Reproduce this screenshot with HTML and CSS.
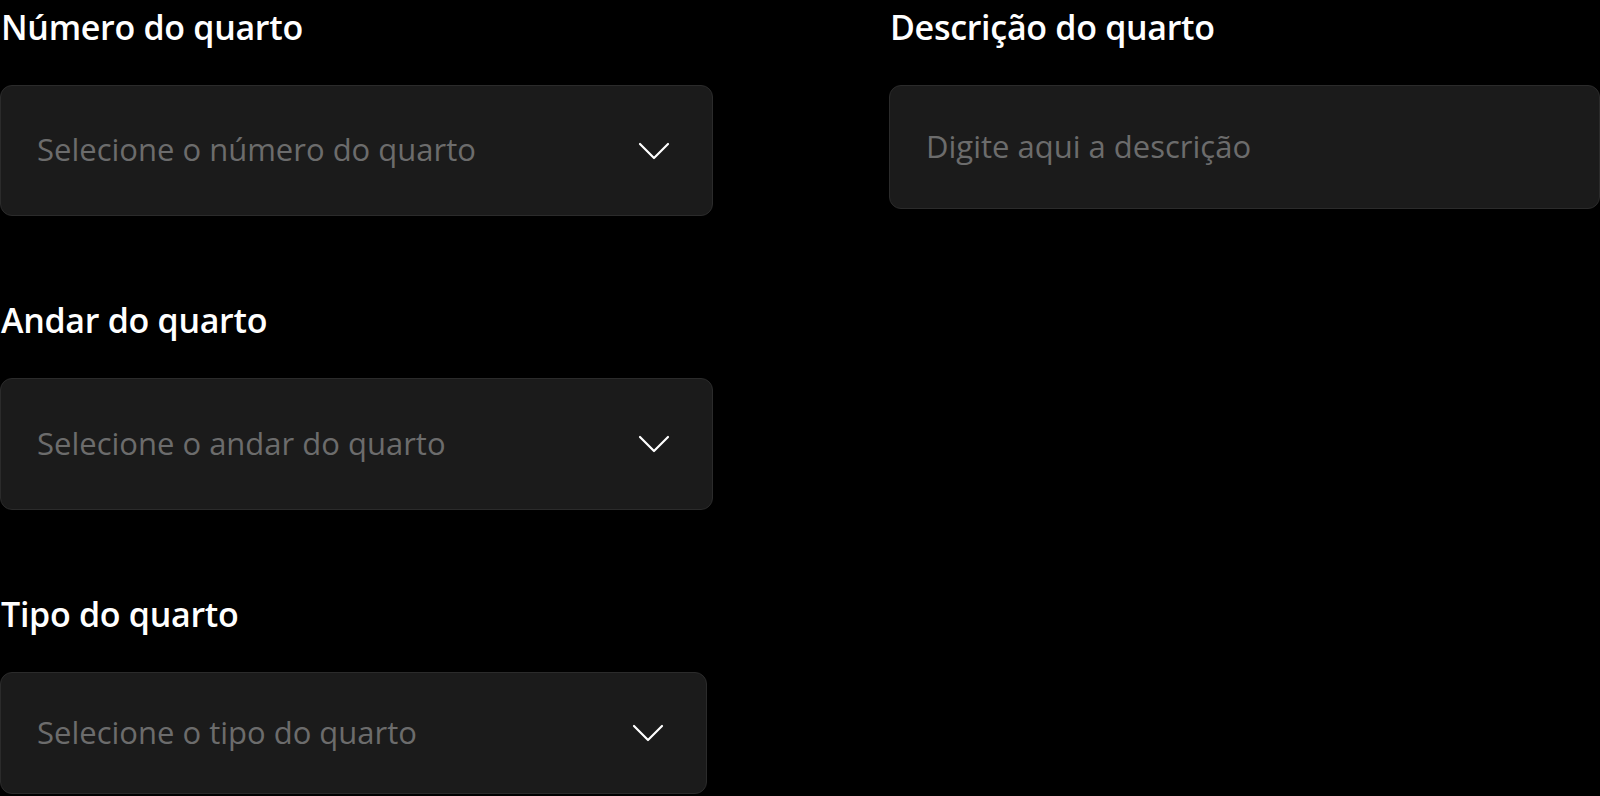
FILE: index.html
```html
<!DOCTYPE html>
<html lang="pt-BR">
<head>
<meta charset="utf-8">
<title>Cadastro de quarto</title>
<link rel="stylesheet" href="styles.css">
</head>
<body>
<main class="form">
  <section class="column">
    <div class="field">
      <label class="label">Número do quarto</label>
      <div class="control control--select control--h131">
        <span class="placeholder">Selecione o número do quarto</span>
        <svg class="chevron" viewBox="0 0 32 18" width="32" height="18" aria-hidden="true"><polyline points="2,2 16,16 30,2"/></svg>
      </div>
    </div>
    <div class="field">
      <label class="label">Andar do quarto</label>
      <div class="control control--select control--h132">
        <span class="placeholder">Selecione o andar do quarto</span>
        <svg class="chevron" viewBox="0 0 32 18" width="32" height="18" aria-hidden="true"><polyline points="2,2 16,16 30,2"/></svg>
      </div>
    </div>
    <div class="field">
      <label class="label">Tipo do quarto</label>
      <div class="control control--select control--h121 control--narrow">
        <span class="placeholder">Selecione o tipo do quarto</span>
        <svg class="chevron" viewBox="0 0 32 18" width="32" height="18" aria-hidden="true"><polyline points="2,2 16,16 30,2"/></svg>
      </div>
    </div>
  </section>
  <section class="column">
    <div class="field">
      <label class="label">Descrição do quarto</label>
      <div class="control control--h124">
        <span class="placeholder">Digite aqui a descrição</span>
      </div>
    </div>
  </section>
</main>
</body>
</html>
```

FILE: styles.css
```css
html, body {
  margin: 0;
  padding: 0;
  background: #000;
}

body {
  font-family: "Open Sans", "Noto Sans", sans-serif;
  color: #fff;
}

.form {
  display: grid;
  grid-template-columns: 713px 711px;
  column-gap: 176px;
  padding-top: 3px;
}

.column {
  display: flex;
  flex-direction: column;
  gap: 80px;
}

.field {
  display: flex;
  flex-direction: column;
  gap: 34px;
}

.label {
  display: block;
  font-size: 34px;
  line-height: 48px;
  font-weight: 600;
  letter-spacing: -0.3px;
  color: #fff;
  padding-left: 1px;
}

.control {
  box-sizing: border-box;
  display: flex;
  align-items: center;
  justify-content: space-between;
  background: #1b1b1b;
  border: 1px solid #2b2b2b;
  border-radius: 12px;
  padding: 0 42px 0 36px;
}

.control--h131 { height: 131px; }
.control--h132 { height: 132px; }
.control--h121 { height: 122px; }
.control--h124 { height: 124px; }

.control--narrow {
  width: 707px;
}

.placeholder {
  font-size: 31px;
  line-height: 31px;
  font-weight: 400;
  color: #6c6c6c;
  position: relative;
  top: -1px;
}

.chevron {
  flex: none;
  fill: none;
  stroke: #fff;
  stroke-width: 2.2;
  stroke-linecap: round;
  stroke-linejoin: round;
}
```
